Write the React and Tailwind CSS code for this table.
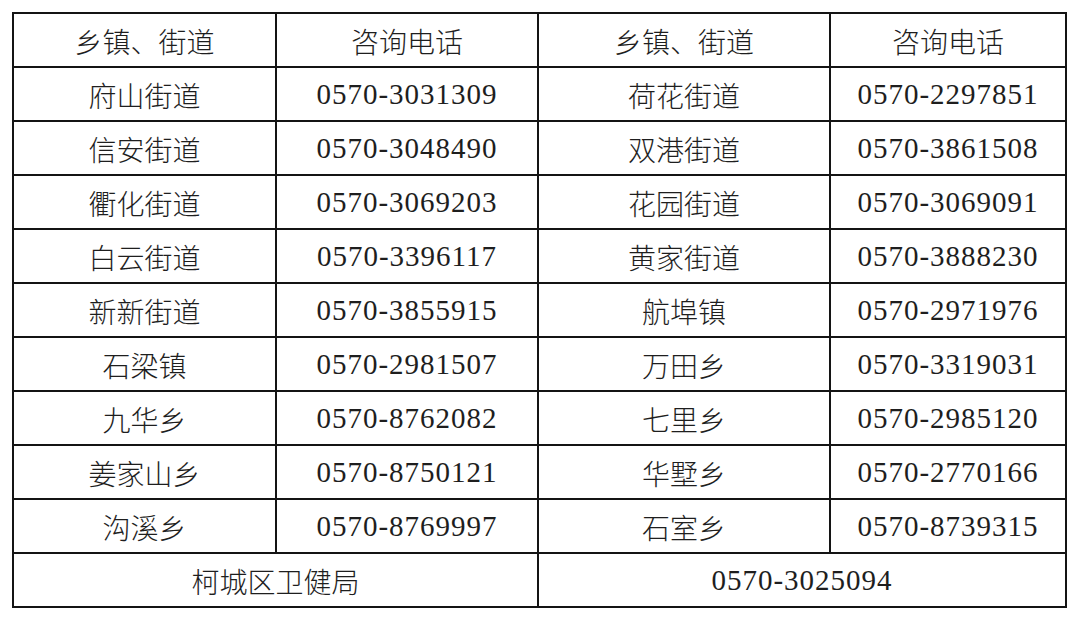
const rows = [
  ["府山街道", "0570-3031309", "荷花街道", "0570-2297851"],
  ["信安街道", "0570-3048490", "双港街道", "0570-3861508"],
  ["衢化街道", "0570-3069203", "花园街道", "0570-3069091"],
  ["白云街道", "0570-3396117", "黄家街道", "0570-3888230"],
  ["新新街道", "0570-3855915", "航埠镇", "0570-2971976"],
  ["石梁镇", "0570-2981507", "万田乡", "0570-3319031"],
  ["九华乡", "0570-8762082", "七里乡", "0570-2985120"],
  ["姜家山乡", "0570-8750121", "华墅乡", "0570-2770166"],
  ["沟溪乡", "0570-8769997", "石室乡", "0570-8739315"],
];

const cjk = "font-['Noto_Sans_CJK_SC',sans-serif] text-[28px] font-light pt-[2px]";
const num = "font-['Liberation_Serif',serif] text-[29px] tracking-[1px] pt-[2px]";
const cell = "flex items-center justify-center border-r-2 border-b-2 border-[#141414] text-[#1e1e1e] h-[54px]";

export default function App() {
  return (
    <div className="w-[1080px] h-[620px] bg-white pt-[12px] pl-[12px]">
      <div className="grid grid-cols-[263px_262px_292px_236px] w-[1055px] border-t-2 border-l-2 border-[#141414]">
        <div className={`${cell} ${cjk}`}>乡镇、街道</div>
        <div className={`${cell} ${cjk}`}>咨询电话</div>
        <div className={`${cell} ${cjk}`}>乡镇、街道</div>
        <div className={`${cell} ${cjk}`}>咨询电话</div>
        {rows.map((r, i) => (
          <div key={i} className="contents">
            <div className={`${cell} ${cjk}`}>{r[0]}</div>
            <div className={`${cell} ${num}`}>{r[1]}</div>
            <div className={`${cell} ${cjk}`}>{r[2]}</div>
            <div className={`${cell} ${num}`}>{r[3]}</div>
          </div>
        ))}
        <div className={`${cell} ${cjk} col-span-2`}>柯城区卫健局</div>
        <div className={`${cell} ${num} col-span-2`}>0570-3025094</div>
      </div>
    </div>
  );
}
